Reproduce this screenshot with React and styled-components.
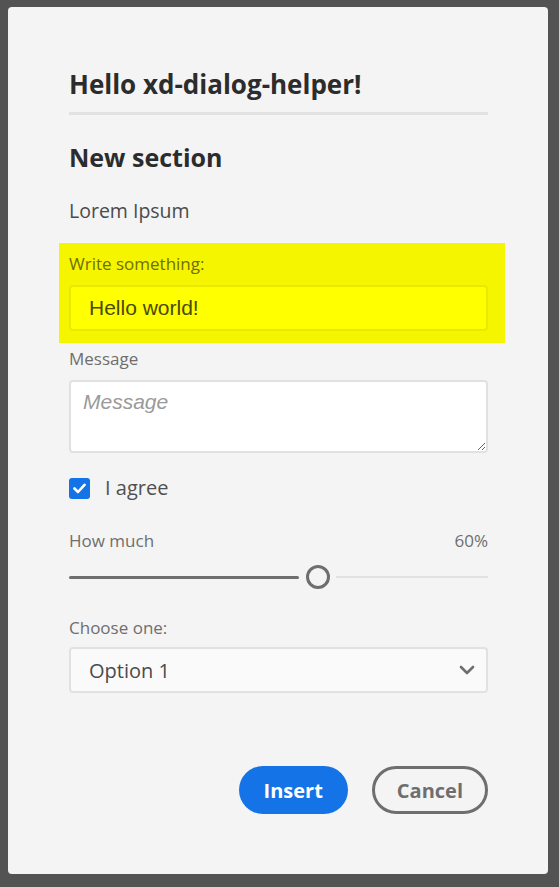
import React, { useState } from "react";
import styled, { createGlobalStyle } from "styled-components";

const GlobalStyle = createGlobalStyle`
  html, body {
    margin: 0;
    padding: 0;
    background: #535353;
    font-family: "Open Sans", "Noto Sans", sans-serif;
  }
  * { box-sizing: border-box; }
`;

const Page = styled.div`
  padding: 7px 11px 12px 8px;
`;

const Dialog = styled.div`
  width: 540px;
  background: #f4f4f4;
  border-radius: 4px;
  padding: 61px 60px 60px 61px;
  display: flex;
  flex-direction: column;
`;

const Title = styled.h1`
  margin: 0;
  font-size: 26px;
  line-height: 32px;
  font-weight: 700;
  color: #2c2c2c;
  padding-bottom: 12px;
  border-bottom: 3px solid #e2e2e2;
`;

const Section = styled.h2`
  margin: 26px 0 0;
  font-size: 25px;
  line-height: 32px;
  font-weight: 700;
  color: #2c2c2c;
`;

const Text = styled.p`
  margin: 25px 0 0;
  font-size: 19.5px;
  line-height: 26px;
  color: #4b4b4b;
`;

const Highlight = styled.div`
  margin: 19px -17px 0 -10px;
  padding: 10px 17px 12px 10px;
  background: #f5f500;
`;

const Label = styled.label`
  display: block;
  margin-top: ${(p) => p.$top || 0}px;
  font-size: 17px;
  line-height: 22px;
  color: ${(p) => p.$color || "#6e6e6e"};
`;

const TextInput = styled.input`
  display: block;
  width: 100%;
  height: 46px;
  margin-top: 10px;
  padding: 0 18px;
  border: 2px solid #e9e900;
  border-radius: 4px;
  background: #ffff00;
  font-family: "Liberation Sans", Arial, sans-serif;
  font-size: 21px;
  color: #4a4a00;
  outline: none;
`;

const Area = styled.textarea`
  display: block;
  width: 100%;
  height: 73px;
  margin-top: 10px;
  padding: 8px 12px;
  border: 2px solid #e1e1e1;
  border-radius: 4px;
  background: #fff;
  font-family: "Liberation Sans", Arial, sans-serif;
  font-size: 21px;
  color: #333;
  outline: none;
  resize: vertical;

  &::placeholder {
    font-style: italic;
    color: #9a9a9a;
  }
`;

const CheckRow = styled.label`
  display: flex;
  align-items: center;
  gap: 15px;
  margin-top: 22px;
  font-size: 20px;
  line-height: 26px;
  color: #505050;
  cursor: pointer;
`;

const Box = styled.span`
  width: 21px;
  height: 21px;
  border-radius: 3px;
  background: ${(p) => (p.$on ? "#1473e6" : "#fff")};
  border: ${(p) => (p.$on ? "none" : "2px solid #8e8e8e")};
  display: flex;
  align-items: center;
  justify-content: center;
`;

const LabelRow = styled.div`
  display: flex;
  justify-content: space-between;
  margin-top: 29px;
  font-size: 17px;
  line-height: 22px;
  color: #6e6e6e;
`;

const Slider = styled.div`
  display: flex;
  align-items: center;
  height: 24px;
  margin-top: 13px;
`;

const Fill = styled.div`
  height: 3px;
  background: #6e6e6e;
  border-radius: 2px;
`;

const Thumb = styled.div`
  width: 24px;
  height: 24px;
  margin: 0 6px 0 7px;
  border-radius: 50%;
  border: 3px solid #6e6e6e;
  background: #f4f4f4;
  flex: none;
`;

const Rest = styled.div`
  flex: 1;
  height: 2px;
  background: #e1e1e1;
  border-radius: 1px;
`;

const Select = styled.div`
  display: flex;
  align-items: center;
  justify-content: space-between;
  height: 46px;
  margin-top: 8px;
  padding: 0 11px 0 18px;
  border: 2px solid #e1e1e1;
  border-radius: 4px;
  background: #fafafa;
  font-size: 20px;
  color: #4b4b4b;
`;

const Footer = styled.div`
  display: flex;
  justify-content: flex-end;
  gap: 24px;
  margin-top: 73px;
`;

const Button = styled.button`
  height: 48px;
  padding: 0 ${(p) => (p.$primary ? 25 : 22)}px;
  border-radius: 24px;
  font-family: "Open Sans", "Noto Sans", sans-serif;
  font-size: 20px;
  font-weight: 700;
  cursor: pointer;
  background: ${(p) => (p.$primary ? "#1473e6" : "transparent")};
  color: ${(p) => (p.$primary ? "#fff" : "#6e6e6e")};
  border: ${(p) => (p.$primary ? "none" : "3px solid #6e6e6e")};
`;

export default function App() {
  const [agree, setAgree] = useState(true);
  const value = 0.6;

  return (
    <Page>
      <GlobalStyle />
      <Dialog>
        <Title>Hello xd-dialog-helper!</Title>
        <Section>New section</Section>
        <Text>Lorem Ipsum</Text>

        <Highlight>
          <Label $color="#6f6f00">Write something:</Label>
          <TextInput defaultValue="Hello world!" />
        </Highlight>

        <Label $top={5}>Message</Label>
        <Area placeholder="Message" />

        <CheckRow onClick={() => setAgree(!agree)}>
          <Box $on={agree}>
            {agree && (
              <svg width="13" height="11" viewBox="0 0 13 11">
                <path d="M1.5 5.5 L5 9 L11.5 1.8" fill="none" stroke="#fff" strokeWidth="2.6" strokeLinecap="round" strokeLinejoin="round" />
              </svg>
            )}
          </Box>
          I agree
        </CheckRow>

        <LabelRow>
          <span>How much</span>
          <span>60%</span>
        </LabelRow>
        <Slider>
          <Fill style={{ width: `calc((100% - 24px) * ${value} - 7px)` }} />
          <Thumb />
          <Rest />
        </Slider>

        <Label $top={28}>Choose one:</Label>
        <Select>
          <span>Option 1</span>
          <svg width="16" height="10" viewBox="0 0 16 10">
            <path d="M2 2 L8 8 L14 2" fill="none" stroke="#6e6e6e" strokeWidth="2.6" strokeLinecap="round" strokeLinejoin="round" />
          </svg>
        </Select>

        <Footer>
          <Button $primary>Insert</Button>
          <Button>Cancel</Button>
        </Footer>
      </Dialog>
    </Page>
  );
}
